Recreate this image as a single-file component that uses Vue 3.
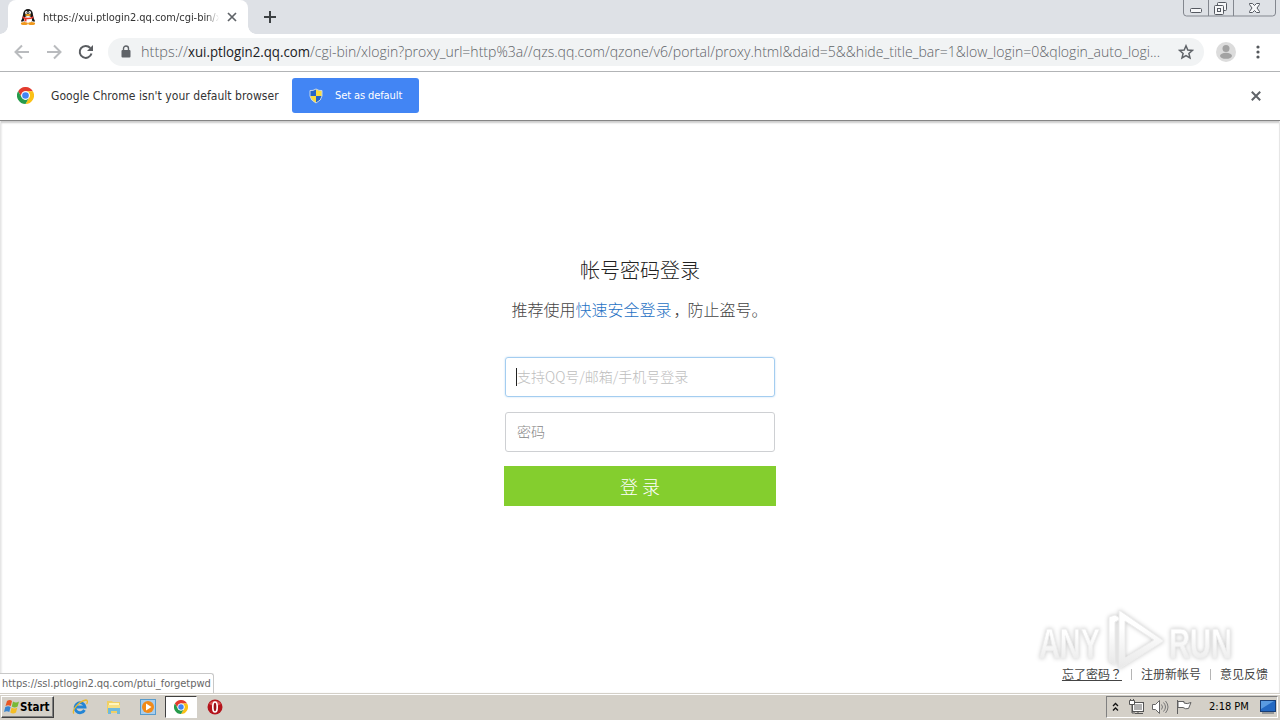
<script setup>
import { ref } from "vue";

const account = ref("");
const password = ref("");
</script>

<template>
  <div class="desktop">
    <header class="tabs">
      <div class="tab">
        <svg class="penguin" viewBox="0 0 16 16">
          <path d="M3 8 1 12l1 1 2-2zM13 8l2 4-1 1-2-2z" fill="#171717" />
          <ellipse cx="8" cy="8.5" rx="5.5" ry="6.500" fill="#171717" />
          <ellipse cx="8" cy="5" rx="4.800" ry="5" fill="#171717" />
          <ellipse cx="8" cy="11" rx="4" ry="4" fill="#fff" />
          <ellipse cx="6.300" cy="3.600" rx="1.300" ry="1.500" fill="#fff" />
          <ellipse cx="9.700" cy="3.600" rx="1.300" ry="1.500" fill="#fff" />
          <circle cx="6.800" cy="3.800" r=".5" />
          <circle cx="9.200" cy="3.800" r=".5" />
          <ellipse cx="8" cy="6" rx="3" ry="1" fill="#f5a51c" />
          <path d="M2.800 7.200q5.200 3 10.400 0l.3 1.800q-3 1.600-7 1.300v2.300l-2-.3V9.900L2.500 9z" fill="#e8342a" />
          <ellipse cx="4.400" cy="14.500" rx="3.500" ry="1.500" fill="#f0981c" />
          <ellipse cx="11.600" cy="14.500" rx="3.500" ry="1.500" fill="#f0981c" />
        </svg>
        <span class="tab-title">https://xui.ptlogin2.qq.com/cgi-bin/x</span>
        <svg class="tab-close" viewBox="0 0 10 10"><path d="M1 1l8 8M9 1L1 9" /></svg>
      </div>
      <svg class="new-tab" viewBox="0 0 12 12"><path d="M6 0v12M0 6h12" /></svg>
      <div class="window-buttons">
        <svg viewBox="0 0 93 17">
          <path d="M.5 0v13q0 3 3 3h86q3 0 3-3V0M25.500 0v16M50.500 0v16" fill="none" stroke="#83878f" />
          <g fill="#f6f7f9" stroke="#555961">
            <rect x="7.500" y="8.500" width="11" height="4" rx="1" />
            <rect x="34.500" y="2.500" width="9" height="8" rx="1" />
            <rect x="31.500" y="5.500" width="9" height="9" rx="1" />
            <rect x="34.500" y="8.500" width="3" height="3" />
            <path d="M66.500 3.500h3l2 2 2-2h3v1L74 8l2.500 3.500v1h-3l-2-2-2 2h-3v-1L69 8l-2.500-3.500z" />
          </g>
        </svg>
      </div>
    </header>

    <nav class="toolbar">
      <svg class="nav-icon dim" viewBox="0 0 16 16"><path d="M15 8H2M8 1.500 1.500 8 8 14.500" /></svg>
      <svg class="nav-icon dim" viewBox="0 0 16 16"><path d="M1 8h13M8 1.500 14.500 8 8 14.500" /></svg>
      <svg class="nav-icon" viewBox="0 0 16 16">
        <path d="M13.500 9.500A6 6 0 1 1 12.300 4" />
        <path d="M15 1v6H9z" class="solid" />
      </svg>
      <div class="omnibox">
        <svg class="lock" viewBox="0 0 10 13">
          <path d="M2.500 6V3.500a2.500 2.500 0 0 1 5 0V6" fill="none" stroke="#5f6368" stroke-width="1.400" />
          <rect x=".5" y="5" width="9" height="7.500" rx="1" fill="#5f6368" />
        </svg>
        <svg class="url" viewBox="0 0 1020 24">
          <text x="0" y="17" textLength="47" lengthAdjust="spacingAndGlyphs">https://</text>
          <text class="host" x="47" y="17" textLength="122" lengthAdjust="spacingAndGlyphs">xui.ptlogin2.qq.com</text>
          <text x="169" y="17" textLength="850" lengthAdjust="spacingAndGlyphs">/cgi-bin/xlogin?proxy_url=http%3a//qzs.qq.com/qzone/v6/portal/proxy.html&amp;daid=5&amp;&amp;hide_title_bar=1&amp;low_login=0&amp;qlogin_auto_logi...</text>
        </svg>
        <svg class="star" viewBox="0 0 16 16">
          <path d="M8 1.800l1.800 4.200 4.600.4-3.500 3 1.100 4.500L8 11.500l-4 2.400 1.100-4.500-3.500-3 4.600-.4z" />
        </svg>
      </div>
      <svg class="avatar" viewBox="0 0 20 20">
        <circle cx="10" cy="10" r="10" fill="#dcdcdc" />
        <circle cx="10" cy="6.500" r="3.500" fill="#a2a2a2" />
        <ellipse cx="10" cy="13.800" rx="6" ry="3" fill="#a2a2a2" />
      </svg>
      <svg class="menu" viewBox="0 0 4 14">
        <circle cx="2" cy="2" r="1.600" /><circle cx="2" cy="7" r="1.600" /><circle cx="2" cy="12" r="1.600" />
      </svg>
    </nav>

    <div class="infobar">
      <svg class="chrome-logo" viewBox="0 0 18 18">
        <path d="M1.200 4.500A9 9 0 0 1 16.800 4.500H9A4.500 4.500 0 0 0 5.100 11.200z" fill="#e33b2e" />
        <path d="M16.800 4.500A9 9 0 0 1 9 18L12.900 11.200A4.500 4.500 0 0 0 9 4.500z" fill="#fbc116" />
        <path d="M9 18A9 9 0 0 1 1.200 4.500L5.100 11.200A4.500 4.500 0 0 0 12.900 11.200z" fill="#269b4b" />
        <circle cx="9" cy="9" r="4.500" fill="#fff" /><circle cx="9" cy="9" r="3.500" fill="#4285f4" />
      </svg>
      <span class="info-text">Google Chrome isn't your default browser</span>
      <button class="default-btn">
        <svg class="shield" viewBox="0 0 14 16">
          <path d="M7 1Q10 3 13 2.500V8Q12.500 12.500 7 15 1.500 12.500 1 8V2.500Q4 3 7 1z" fill="#2565c7" />
          <path d="M7 1Q10 3 13 2.500V8H7zM1 8h6v7Q1.500 12.500 1 8z" fill="#f9dc3e" />
          <path d="M7 1Q10 3 13 2.500V8Q12.500 12.500 7 15 1.500 12.500 1 8V2.500Q4 3 7 1z" fill="none" stroke="#c8d7e6" />
        </svg>
        <span>Set as default</span>
      </button>
      <svg class="info-close" viewBox="0 0 10 10"><path d="M.8.8l8.400 8.400M9.200.8L.8 9.200" /></svg>
    </div>

    <main class="page">
      <form class="login" @submit.prevent>
        <h1>帐号密码登录</h1>
        <p class="tip">推荐使用<a>快速安全登录</a><span class="comma">，</span>防止盗号。</p>
        <label class="field focused">
          <i class="caret"></i>
          <input v-model="account" placeholder="支持QQ号/邮箱/手机号登录" />
        </label>
        <label class="field">
          <input v-model="password" type="password" placeholder="密码" />
        </label>
        <button class="submit">登 录</button>
      </form>

      <svg class="watermark" viewBox="0 0 200 64">
        <defs>
          <linearGradient id="fade" x1="0" y1="0" x2="0" y2="1">
            <stop offset=".3" stop-color="#fff" />
            <stop offset="1" stop-color="#e8e8e8" />
          </linearGradient>
        </defs>
        <g class="mark-text">
          <text x="3" y="49" textLength="61" lengthAdjust="spacingAndGlyphs">ANY</text>
          <text x="133" y="49" textLength="63" lengthAdjust="spacingAndGlyphs">RUN</text>
        </g>
        <g class="mark-shape">
          <path d="M73 8v44l6 4V13l6-3-6-4z" />
          <path fill-rule="evenodd" d="M83 1v59l45-28zM89 12v37l29-18z" />
        </g>
      </svg>
      <div class="links">
        <a class="forgot">忘了密码<span class="question">？</span></a><i></i><a>注册新帐号</a><i></i><a>意见反馈</a>
      </div>
      <div class="status">https://ssl.ptlogin2.qq.com/ptui_forgetpwd</div>
    </main>

    <footer class="taskbar">
      <button class="start">
        <svg viewBox="0 0 16 16">
          <path d="M3 2q3-2 5 0L6.800 7Q4 5.500 1.500 7z" fill="#e95723" />
          <path d="M9 2.500q3 2 6 0L13.600 7.500q-3 2-5.800 0z" fill="#78b935" />
          <path d="M1.300 8q3-1.500 5.300 0L5.300 13Q3 11.500 0 13z" fill="#3985d0" />
          <path d="M7.600 8.500q3 2 5.700 0L12 13.500q-3 2-5.700 0z" fill="#f4bd25" />
        </svg>
        <span>Start</span>
      </button>
      <div class="apps">
        <div class="app">
          <svg viewBox="0 0 16 16">
            <path d="M12.500 11A5 5 0 1 1 13 8H4" fill="none" stroke="#2385d5" stroke-width="2.800" />
            <path d="M2 14.500C-1 12 7 2 14 1c2 0 1.500 3 .5 4" fill="none" stroke="#e9b92d" stroke-width="1.300" />
          </svg>
        </div>
        <div class="app">
          <svg viewBox="0 0 16 16">
            <path d="M1 2h5l1 1h7v11H1z" fill="#efcf65" /><path d="M3 4h10v4H3z" fill="#fff5bc" />
            <path d="M2 6h12v5H2z" fill="#f7df83" /><path d="M2 15V9h12v6h-3v-3H5v3z" fill="#6fb9dc" />
          </svg>
        </div>
        <div class="app">
          <svg viewBox="0 0 16 16">
            <rect x=".5" y=".5" width="15" height="15" fill="#a8cdec" stroke="#579bcc" />
            <circle cx="8" cy="8" r="6" fill="#f28a18" /><path d="M6 4.500 11.500 8 6 11.500z" fill="#fff" />
          </svg>
        </div>
        <div class="app pressed">
          <svg class="small" viewBox="0 0 18 18">
            <path d="M1.200 4.500A9 9 0 0 1 16.800 4.500H9A4.500 4.500 0 0 0 5.100 11.200z" fill="#e33b2e" />
            <path d="M16.800 4.500A9 9 0 0 1 9 18L12.900 11.200A4.500 4.500 0 0 0 9 4.500z" fill="#fbc116" />
            <path d="M9 18A9 9 0 0 1 1.200 4.500L5.100 11.200A4.500 4.500 0 0 0 12.900 11.200z" fill="#269b4b" />
            <circle cx="9" cy="9" r="4.500" fill="#fff" /><circle cx="9" cy="9" r="3.500" fill="#4285f4" />
          </svg>
        </div>
        <div class="app">
          <svg viewBox="0 0 16 16">
            <circle cx="8" cy="8" r="7.500" fill="#b4141c" />
            <path d="M2 5a7 6 0 0 1 12 0q-6 4-12 0z" fill="#dc5052" />
            <ellipse cx="8" cy="8" rx="2.200" ry="5" fill="#9b1018" stroke="#fff" stroke-width="1.700" />
          </svg>
        </div>
      </div>
      <div class="tray">
        <svg class="chevrons" viewBox="0 0 7 10"><path d="M1 4l2.500-2.500L6 4M1 8.500 3.500 6 6 8.500" /></svg>
        <svg class="network" viewBox="0 0 17 16">
          <rect x="4.500" y="3.500" width="11" height="9" fill="#b0b0b0" stroke="#555" />
          <path d="M5.500 4.500h9v7h-9z" fill="none" stroke="#fff" /><path d="M7 14.500h8M10 13v2" stroke="#555" />
          <path d="M1.500 1.500h5v4h-5z" fill="#fff" stroke="#555" />
          <path d="M2.500 0v2M5.500 0v2M4 6v8h3" fill="none" stroke="#555" />
        </svg>
        <svg class="sound" viewBox="0 0 17 16">
          <path d="M.5 5.500h3l4-4v13l-4-4h-3z" fill="#fff" stroke="#666" />
          <path d="M9.500 5.500q2 2.500 0 5M11.500 3.500q4 4.500 0 9M13.500 2q5 6 0 12" fill="none" stroke="#777" />
        </svg>
        <svg class="flag" viewBox="0 0 17 16">
          <path d="M1.500 1v14M2 2.500h6v1.500q3 1.500 7-.5l-2.500 6q-3 1-5.500-1H2z" fill="#fff" stroke="#606060" />
        </svg>
        <span class="clock">2:18 PM</span>
        <svg class="show-desktop" viewBox="0 0 16 14">
          <rect x=".5" y=".5" width="15" height="11" fill="#2469c2" stroke="#183e76" />
          <path d="M1 1h13L1 9z" fill="#5a9be0" /><path d="M2 13h12" stroke="#56616d" />
        </svg>
      </div>
    </footer>
  </div>
</template>

<style>
body {
  margin: 0;
  overflow: hidden;
}
</style>

<style scoped>
* {
  box-sizing: border-box;
}
.desktop {
  width: 1280px;
  height: 720px;
  display: flex;
  flex-direction: column;
  background: #fff;
  font-family: "DejaVu Sans Condensed", "DejaVu Sans", "Noto Sans CJK SC", sans-serif;
  font-stretch: condensed;
  color: #333;
}
svg {
  display: block;
  flex: none;
}
button {
  font-family: inherit;
}
.tabs {
  height: 34px;
  flex: none;
  display: flex;
  background: #dee1e6;
  padding-left: 8px;
}
.tab {
  width: 240px;
  height: 34px;
  display: flex;
  align-items: center;
  padding: 0 11px 0 12px;
  background: #fff;
  border-radius: 8px 8px 0 0;
  position: relative;
}
.tab::before,
.tab::after {
  content: "";
  position: absolute;
  bottom: 0;
  width: 8px;
  height: 8px;
}
.tab::before {
  left: -8px;
  background: radial-gradient(circle at 0 0, transparent 7.5px, #fff 8px);
}
.tab::after {
  right: -8px;
  background: radial-gradient(circle at 100% 0, transparent 7.5px, #fff 8px);
}
.penguin {
  width: 16px;
  height: 16px;
}
.tab-title {
  width: 177px;
  margin: 0 7px 0 7px;
  white-space: nowrap;
  font-size: 11px;
  letter-spacing: -0.04px;
  mask-image: linear-gradient(90deg, #000 163px, transparent 176px);
}
.tab-close {
  width: 10px;
  height: 10px;
  fill: none;
  stroke: #5f6368;
  stroke-width: 1.7;
}
.new-tab {
  width: 12px;
  height: 12px;
  margin: 11px 0 0 16px;
  stroke: #3c4043;
  stroke-width: 2;
}
.window-buttons {
  margin: 0 4px 0 auto;
}
.window-buttons svg {
  width: 93px;
  height: 17px;
}
.toolbar {
  height: 38px;
  flex: none;
  display: flex;
  align-items: center;
  padding: 0 20px 2px 14px;
  border-bottom: 1px solid #b2b4b6;
}
.nav-icon {
  width: 16px;
  height: 16px;
  margin-right: 16px;
  fill: none;
  stroke: #5a5d61;
  stroke-width: 2;
}
.nav-icon.dim {
  stroke: #b9bbbe;
}
.nav-icon .solid {
  fill: #5a5d61;
  stroke: none;
}
.omnibox {
  width: 1096px;
  height: 28px;
  margin-left: -2px;
  display: flex;
  align-items: center;
  padding: 0 10px 0 13px;
  background: #f1f3f4;
  border-radius: 14px;
}
.lock {
  width: 10px;
  height: 13px;
  margin-right: 10px;
}
.url {
  width: 1020px;
  height: 24px;
  font-family: "Open Sans", "Noto Sans", sans-serif;
  font-stretch: normal;
  font-size: 14px;
  font-weight: 300;
  fill: #5f6368;
}
.url .host {
  font-weight: 400;
  fill: #202124;
}
.star {
  width: 16px;
  height: 16px;
  margin-left: auto;
  fill: none;
  stroke: #5f6368;
  stroke-width: 1.5;
}
.avatar {
  width: 20px;
  height: 20px;
  margin-left: 12px;
}
.menu {
  width: 4px;
  height: 14px;
  margin-left: auto;
  fill: #55585c;
}
.infobar {
  height: 49px;
  flex: none;
  display: flex;
  align-items: center;
  padding: 0 19px 1px 17px;
  border-bottom: 1px solid #858585;
}
.chrome-logo {
  width: 17px;
  height: 17px;
}
.info-text {
  width: 228px;
  margin: 0 13px 0 17px;
  white-space: nowrap;
  font-size: 12px;
  letter-spacing: 0.05px;
}
.default-btn {
  width: 127px;
  height: 35px;
  display: flex;
  align-items: center;
  padding: 0 0 0 17px;
  border: 0;
  border-radius: 3px;
  background: #4285f4;
  color: #fff;
  font-size: 11px;
  letter-spacing: -0.1px;
  white-space: nowrap;
}
.shield {
  width: 14px;
  height: 16px;
  margin-right: 12px;
}
.info-close {
  width: 10px;
  height: 10px;
  margin-left: auto;
  fill: none;
  stroke: #5f6368;
  stroke-width: 2;
}
.page {
  flex: 1;
  position: relative;
  display: flex;
  justify-content: center;
  border: solid #e6e6e6;
  border-width: 0 1px;
  box-shadow: inset 0 3px 2px -1px #ccc, inset 1px 0 2px #eee;
  font-family: "Noto Sans CJK SC", sans-serif;
}
.login {
  width: 272px;
  padding-top: 136px;
  text-align: center;
}
.login h1 {
  margin: 0;
  font-size: 20px;
  line-height: 26px;
  font-weight: 300;
  color: #222;
}
.tip {
  margin: 14px 0 35px;
  padding-left: 7.5px;
  white-space: nowrap;
  text-align: left;
  font-size: 16px;
  line-height: 25px;
  font-weight: 300;
  color: #444;
}
.tip a {
  color: #1f72c4;
}
.comma {
  padding-left: 2px;
  margin-right: -2px;
}
.field {
  width: 270px;
  height: 40px;
  margin: 0 1px 15px;
  display: flex;
  align-items: center;
  padding: 0 0 2px 11px;
  border: 1px solid #ced0d3;
  border-radius: 3px;
  position: relative;
}
.field.focused {
  border-color: #a4cdf0;
  box-shadow: 0 0 2px #b9daf3;
}
.field input {
  width: 240px;
  padding: 0;
  border: 0;
  outline: 0;
  background: none;
  font: 300 14px "Noto Sans CJK SC", sans-serif;
}
.field input::placeholder {
  color: #888;
}
.field.focused input::placeholder {
  color: #bdbdbd;
}
.caret {
  position: absolute;
  left: 10px;
  top: 10px;
  width: 1px;
  height: 18px;
  background: #222;
}
.submit {
  display: block;
  width: 272px;
  height: 40px;
  margin-top: -1px;
  padding: 0;
  border: 0;
  background: #84ce2e;
  color: #fff;
  font: 300 18px "Noto Sans CJK SC", sans-serif;
}
.watermark {
  position: absolute;
  right: 43px;
  bottom: 20px;
  width: 200px;
  height: 64px;
  overflow: visible;
  fill: url(#fade);
  stroke: #ededed;
  stroke-width: 1;
  filter: drop-shadow(0 0 2px #c8c8c8);
}
.mark-text {
  font: bold 43px "Liberation Sans", sans-serif;
}
.links {
  position: absolute;
  right: 11px;
  bottom: 10px;
  display: flex;
  align-items: center;
  font-size: 12px;
  line-height: 18px;
  color: #444;
}
.links i {
  width: 1px;
  height: 11px;
  margin: 0 9px;
  background: #b5b5b5;
}
.forgot {
  text-decoration: underline;
}
.question {
  font-family: "Noto Sans CJK TC", sans-serif;
}
.status {
  position: absolute;
  left: -1px;
  bottom: 0;
  width: 214px;
  height: 20px;
  padding-left: 2px;
  border: solid #c8c8c8;
  border-width: 1px 1px 0 0;
  border-radius: 0 3px 0 0;
  background: #fff;
  font: 11px/19px "DejaVu Sans Condensed", sans-serif;
  font-stretch: condensed;
  letter-spacing: -0.03px;
  white-space: nowrap;
  color: #666;
}
.taskbar {
  height: 27px;
  flex: none;
  display: flex;
  align-items: center;
  padding: 0 2px 1px 1px;
  background: #d4d0c8;
  border-top: 1px solid #d4d0c8;
  box-shadow: inset 0 1px #fff;
}
.start {
  width: 53px;
  height: 22px;
  display: flex;
  align-items: center;
  padding: 0 2px;
  border: 1px solid;
  border-color: #fff #404040 #404040 #fff;
  box-shadow: inset -1px -1px #808080;
  background: #d4d0c8;
  font-size: 11.5px;
  font-weight: bold;
  color: #000;
}
.start svg {
  width: 16px;
  height: 16px;
}
.apps {
  display: flex;
  margin-left: 9px;
}
.app {
  width: 34px;
  height: 22px;
  display: flex;
  align-items: center;
  justify-content: center;
}
.app svg {
  width: 16px;
  height: 16px;
}
.app svg.small {
  width: 14px;
  height: 14px;
}
.pressed {
  width: 32px;
  margin-right: 1px;
  background: #fff;
  border: 1px solid;
  border-color: #404040 #fff #fff #404040;
}
.tray {
  width: 172px;
  height: 22px;
  margin-left: auto;
  display: flex;
  align-items: center;
  padding-left: 5px;
  border: 1px solid;
  border-color: #808080 #fff #fff #808080;
}
.chevrons {
  width: 7px;
  height: 10px;
  margin-right: 9px;
  fill: none;
  stroke: #111;
  stroke-width: 1.3;
}
.network,
.sound,
.flag {
  width: 17px;
  height: 16px;
  margin-right: 7px;
}
.clock {
  width: 40px;
  margin-left: 9px;
  font-size: 11px;
  white-space: nowrap;
  color: #000;
}
.show-desktop {
  width: 16px;
  height: 14px;
  margin-left: auto;
  margin-right: 1px;
}
</style>
